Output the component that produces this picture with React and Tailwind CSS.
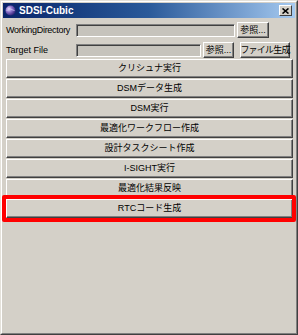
import React from 'react';

const font = { fontFamily: '"Liberation Sans", "Noto Sans CJK JP", sans-serif' };

function RaisedButton({ children, className = '' }) {
  return (
    <div
      className={`flex items-center justify-center whitespace-nowrap bg-[#d4d0c8] border-t border-l border-t-white border-l-white border-r border-b border-r-[#404040] border-b-[#404040] shadow-[inset_-1px_-1px_0_#808080] text-[9px] leading-none text-black ${className}`}
    >
      {children}
    </div>
  );
}

function SunkenInput({ className = '' }) {
  return (
    <div
      className={`bg-[#c6c3bc] border-t border-l border-t-[#808080] border-l-[#808080] border-r border-b border-r-white border-b-white shadow-[inset_1px_1px_0_#404040] ${className}`}
    />
  );
}

const actions = [
  'クリシュナ実行',
  'DSMデータ生成',
  'DSM実行',
  '最適化ワークフロー作成',
  '設計タスクシート作成',
  'I-SIGHT実行',
  '最適化結果反映',
  'RTCコード生成',
];

export default function App() {
  return (
    <div className="w-[298px] h-[335px] relative bg-[#d4d0c8]" style={font}>
      <div className="w-full h-full border-t border-l border-t-[#e4e1da] border-l-[#e4e1da] border-r border-b border-r-[#404040] border-b-[#404040]">
        <div className="w-full h-full border-t border-l border-t-white border-l-white border-r border-b border-r-[#808080] border-b-[#808080] p-[1px]">
          {/* title bar */}
          <div className="h-[15px] flex items-center bg-gradient-to-r from-[#0a246a] via-[#2a5a9a] to-[#a6caf0] pl-[2px] pr-[2px]">
            <svg width="11" height="11" viewBox="0 0 11 11" className="mr-[3px]">
              <defs>
                <radialGradient id="g" cx="35%" cy="35%" r="65%">
                  <stop offset="0%" stopColor="#e8e0ff" />
                  <stop offset="50%" stopColor="#8a70c8" />
                  <stop offset="100%" stopColor="#3a2a80" />
                </radialGradient>
              </defs>
              <circle cx="5.5" cy="5.5" r="5" fill="url(#g)" />
              <path d="M1.5 5.5 Q5.5 3 9.5 5.5" stroke="#c8c0f0" strokeWidth="0.8" fill="none" />
            </svg>
            <span className="text-[10px] font-bold text-white leading-none">SDSI-Cubic</span>
            <div className="ml-auto mr-[1px] w-[13px] h-[11px] bg-[#d4d0c8] border-t border-l border-t-white border-l-white border-r border-b border-r-[#404040] border-b-[#404040] flex items-center justify-center">
              <svg width="7" height="6" viewBox="0 0 7 6">
                <path d="M0.5 0.5 L6.5 5.5 M6.5 0.5 L0.5 5.5" stroke="#000" strokeWidth="1.6" />
              </svg>
            </div>
          </div>

          <div className="pl-[3px] pr-[2px]">
            {/* Working directory */}
            <div className="flex items-center h-[16px] mt-[4px]">
              <div className="w-[70px] text-[9px] leading-none text-black tracking-[-0.3px]">WorkingDirectory</div>
              <SunkenInput className="w-[159px] h-[13px]" />
              <RaisedButton className="ml-[2px] w-[32px] h-[16px]">参照...</RaisedButton>
            </div>

            {/* Target file */}
            <div className="flex items-center h-[16px] mt-[4px]">
              <div className="w-[70px] text-[9px] leading-none text-black">Target File</div>
              <SunkenInput className="w-[125px] h-[13px]" />
              <RaisedButton className="ml-[2px] w-[31px] h-[16px]">参照...</RaisedButton>
              <RaisedButton className="ml-[6px] w-[50px] h-[16px] text-[8px] tracking-[-0.8px]">ファイル生成</RaisedButton>
            </div>

            {/* actions */}
            <div className="flex flex-col gap-[1px] mt-[1px] w-[287px]">
              {actions.map(a => (
                <RaisedButton key={a} className="h-[19px] w-full">
                  {a}
                </RaisedButton>
              ))}
            </div>
          </div>
        </div>
      </div>

      {/* highlight */}
      <div className="absolute left-[2px] top-[195px] w-[294px] h-[27px] border-[4px] border-[#ff0000] rounded-[2px]" />
    </div>
  );
}
